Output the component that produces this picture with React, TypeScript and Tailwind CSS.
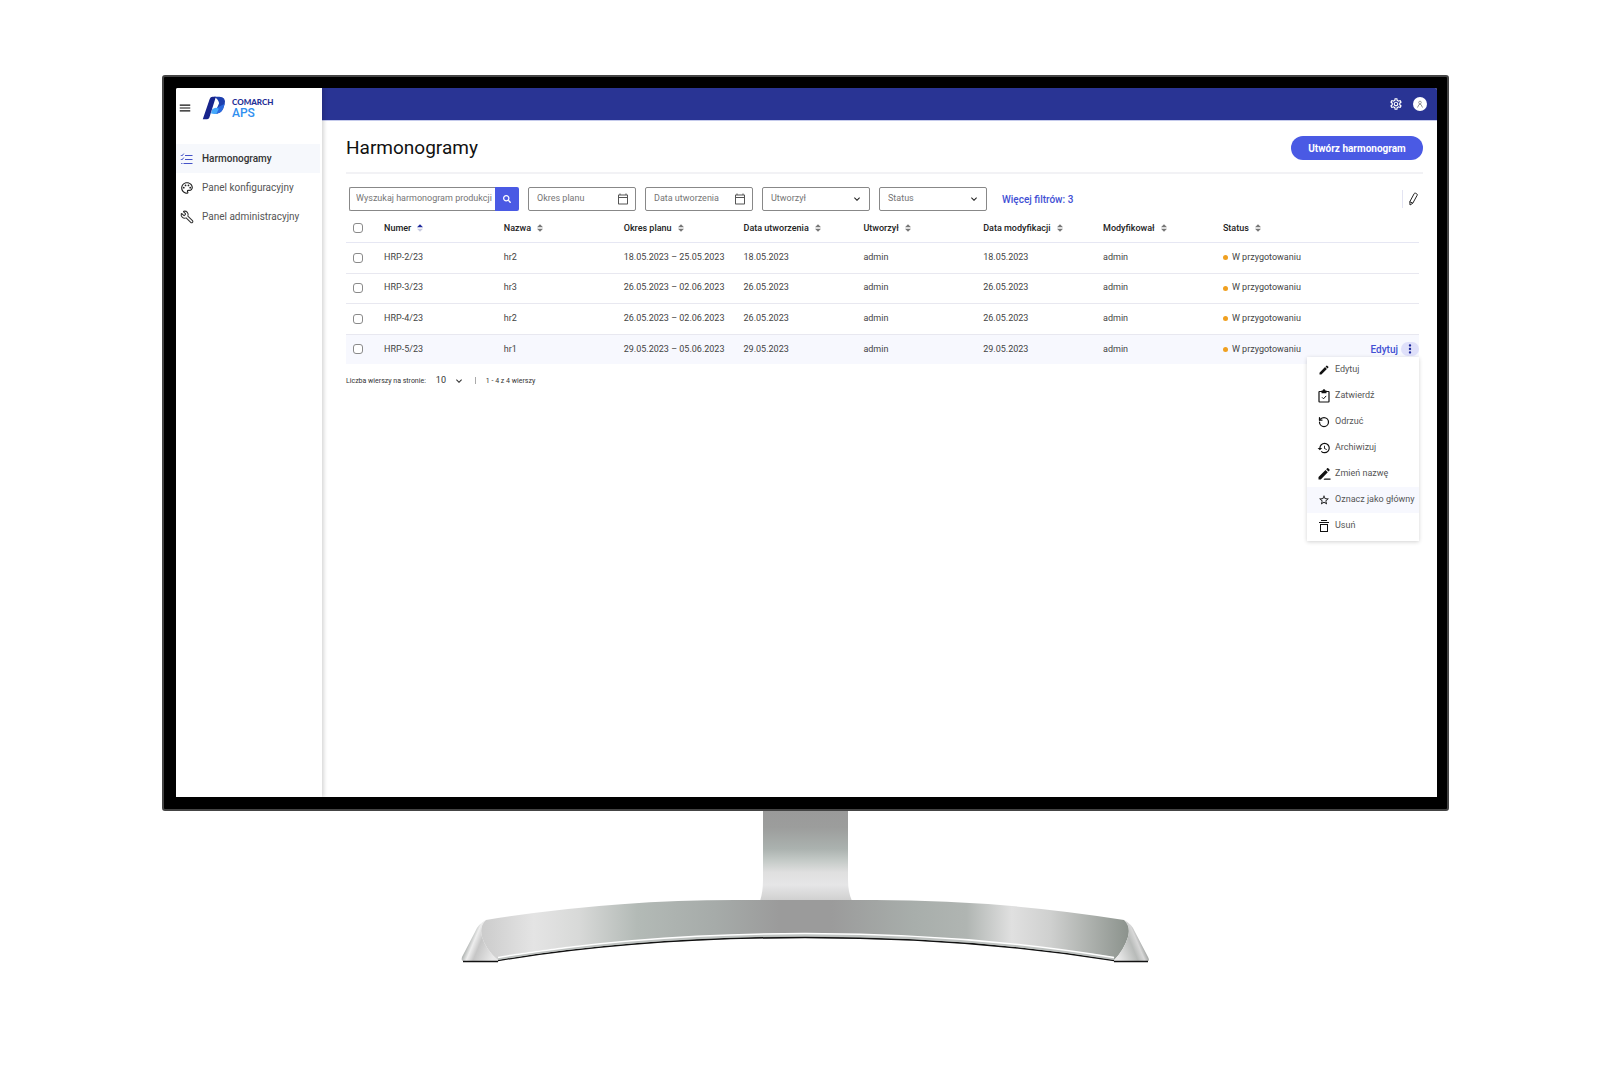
import React from "react";
import {
  MdEdit,
  MdHistory,
  MdStarBorder,
  MdOutlineSettings,
  MdOutlinePalette,
  MdMoreVert,
  MdMenu,
  MdOutlineCalendarToday,
  MdKeyboardArrowDown,
} from "react-icons/md";
import { FaSearch } from "react-icons/fa";
import { RotateCcw, Wrench } from "lucide-react";

type Row = {
  number: string;
  name: string;
  period: string;
  created: string;
  createdBy: string;
  modified: string;
  modifiedBy: string;
  status: string;
};

const columns = [
  "Numer",
  "Nazwa",
  "Okres planu",
  "Data utworzenia",
  "Utworzył",
  "Data modyfikacji",
  "Modyfikował",
  "Status",
];

const rows: Row[] = [
  { number: "HRP-2/23", name: "hr2", period: "18.05.2023 – 25.05.2023", created: "18.05.2023", createdBy: "admin", modified: "18.05.2023", modifiedBy: "admin", status: "W przygotowaniu" },
  { number: "HRP-3/23", name: "hr3", period: "26.05.2023 – 02.06.2023", created: "26.05.2023", createdBy: "admin", modified: "26.05.2023", modifiedBy: "admin", status: "W przygotowaniu" },
  { number: "HRP-4/23", name: "hr2", period: "26.05.2023 – 02.06.2023", created: "26.05.2023", createdBy: "admin", modified: "26.05.2023", modifiedBy: "admin", status: "W przygotowaniu" },
  { number: "HRP-5/23", name: "hr1", period: "29.05.2023 – 05.06.2023", created: "29.05.2023", createdBy: "admin", modified: "29.05.2023", modifiedBy: "admin", status: "W przygotowaniu" },
];

function ClipboardIcon() {
  return (
    <svg viewBox="0 0 14 14" className="size-3.5" fill="none" stroke="currentColor" strokeWidth="1.2">
      <rect x="2" y="2.5" width="10" height="10.5" rx="0.5" />
      <path d="M4.5 1.5h1.2a1.3 1.3 0 0 1 2.6 0h1.2v2.7h-5z" fill="currentColor" stroke="none" />
      <path d="M5 8.3l1.5 1.5 2.7-2.9" strokeWidth="1" />
    </svg>
  );
}

function RenameIcon() {
  return (
    <svg viewBox="0 0 14 14" className="size-3.5" fill="currentColor">
      <path d="M1.5 12.5v-2.4L8.5 3l2.300 2.300-7 7.200zM9.200 2.300l1-1c.3-.3.700-.3 1 0l1.300 1.300c.3.300.3.700 0 1l-1 1zM7.500 11.500h6v1.200h-7z" />
    </svg>
  );
}

function BinIcon() {
  return (
    <svg viewBox="0 0 12 12" className="size-3" fill="currentColor">
      <path d="M3 0h6v1H3zM1 2h10v1H1zM2 4h8v8H2zM3 5v6h6V5z" fillRule="evenodd" />
    </svg>
  );
}

function ChecklistIcon() {
  return (
    <svg viewBox="0 0 14 14" className="size-3.5 text-[#4452c8]" fill="none" stroke="currentColor" strokeWidth="1.2">
      <path d="M5 3.5H12.5M5 7.5H12.5M3.5 11.5H12.500M1.2 11.5h1.2" />
      <path d="M.8 3l1 1 2-2.400M.8 7l1 1 2-2.400" strokeWidth="1" />
    </svg>
  );
}

function Logo() {
  return (
    <svg viewBox="0 0 24 25" className="h-6 w-6" aria-hidden="true">
      <path d="M12 .8h5.500Q24.500 1 23.200 8L21.600 13Q19.500 18.600 12.500 18.600L17.300 7.500Q16.500 3 12 .8z" fill="#1d3fae" />
      <path d="M23.200 8L21.600 13Q19.500 18.600 12.500 18.600L15.500 12z" fill="#2a6ade" />
      <path d="M10.200 13.800Q13.500 10.800 17 13.200L14.600 18.400Q11.500 19 8.800 18z" fill="#45a8fb" />
      <path d="M7.500 3Q8.300.8 10.500.8H14L7.200 22.300Q6.600 24.200 4.800 24.200H.3z" fill="#17248c" />
    </svg>
  );
}

function SortIcon({ active }: { active?: boolean }) {
  return (
    <svg viewBox="0 0 8 10" className="h-2 w-1.5" aria-hidden="true">
      <path d="M4 0l4 4H0z" fill={active ? "#1f2a9c" : "#777"} />
      <path d="M4 10l4-4H0z" fill={active ? "#c9cbe0" : "#777"} />
    </svg>
  );
}

function CheckBox({ label }: { label: string }) {
  return (
    <input
      type="checkbox"
      aria-label={label}
      className="ml-[7px] block size-2.5 appearance-none rounded-[3px] border border-[#8a8a8a] bg-white"
    />
  );
}

const fieldBox =
  "flex h-6 w-27 items-center rounded-[2px] border border-[#888] bg-white pr-1.5 pl-2";

function DateField({ label }: { label: string }) {
  return (
    <label className={fieldBox}>
      <input
        type="text"
        aria-label={label}
        placeholder={label}
        className="w-full min-w-0 flex-1 bg-transparent outline-none placeholder:text-[#757575]"
      />
      <MdOutlineCalendarToday className="size-3 text-[#555]" />
    </label>
  );
}

function SelectField({ label }: { label: string }) {
  return (
    <label className={fieldBox}>
      <select
        aria-label={label}
        className="w-full min-w-0 flex-1 appearance-none bg-transparent text-[#757575] outline-none"
      >
        <option>{label}</option>
      </select>
      <MdKeyboardArrowDown className="size-3 text-[#222]" />
    </label>
  );
}

const menuItems = [
  { label: "Edytuj", icon: <MdEdit className="size-3" /> },
  { label: "Zatwierdź", icon: <ClipboardIcon /> },
  { label: "Odrzuć", icon: <RotateCcw className="size-3" strokeWidth={2.5} /> },
  { label: "Archiwizuj", icon: <MdHistory className="size-3.5" /> },
  { label: "Zmień nazwę", icon: <RenameIcon /> },
  { label: "Oznacz jako główny", icon: <MdStarBorder className="size-3" />, active: true },
  { label: "Usuń", icon: <BinIcon /> },
];

function ContextMenu() {
  return (
    <ul
      role="menu"
      className="absolute top-full right-0 z-10 w-28 bg-white pb-0.5 text-[#555] shadow-[0_1px_4px_rgba(0,0,0,0.18)]"
    >
      {menuItems.map((item) => (
        <li key={item.label} role="none">
          <button
            type="button"
            role="menuitem"
            className={
              item.active
                ? "flex h-[26px] w-full items-center gap-1 bg-[#f7f8fe] pl-2.5 whitespace-nowrap"
                : "flex h-[26px] w-full items-center gap-1 pl-2.5 whitespace-nowrap"
            }
          >
            <span className="flex w-3.5 justify-center text-[#111]">{item.icon}</span>
            {item.label}
          </button>
        </li>
      ))}
    </ul>
  );
}

function Sidebar() {
  return (
    <aside className="z-10 w-[146px] shrink-0 bg-white shadow-[2px_0_4px_rgba(0,0,0,0.16)]">
      <div className="flex h-10 items-center">
        <button type="button" aria-label="Menu" className="ml-0.5">
          <MdMenu className="size-3.5 stroke-[#111] text-[#111]" />
        </button>
        <div className="ml-2.5 flex items-center gap-1.5">
          <Logo />
          <div className="flex flex-col font-['Lato',sans-serif] font-bold">
            <span className="text-[8px] leading-[10px] font-black text-[#1f2f96]">COMARCH</span>
            <span className="font-['Roboto',sans-serif] text-[12px] leading-[13px] font-medium text-[#2f8ff0]">APS</span>
          </div>
        </div>
      </div>
      <nav className="mt-4 text-[10px] text-[#555]">
        <a href="#harmonogramy" className="mr-0.5 flex h-[29px] items-center gap-2 bg-[#f6f8fc] pl-1 font-medium text-[#333]">
          <ChecklistIcon />
          Harmonogramy
        </a>
        <a href="#konfiguracja" className="flex h-[29px] items-center gap-2 pl-1">
          <MdOutlinePalette className="size-3.5 text-[#222]" />
          Panel konfiguracyjny
        </a>
        <a href="#administracja" className="flex h-[29px] items-center gap-2 pl-1">
          <Wrench className="size-3.5 -scale-x-100 text-[#333]" strokeWidth={1.8} />
          Panel administracyjny
        </a>
      </nav>
    </aside>
  );
}

function Filters() {
  return (
    <div className="mt-[13px] flex items-center gap-[9px] pl-[3px]">
      <form className="flex h-6 w-[170px]">
        <input
          type="text"
          aria-label="Wyszukaj harmonogram produkcji"
          placeholder="Wyszukaj harmonogram produkcji"
          className="w-full min-w-0 flex-1 rounded-l-[2px] border border-r-0 border-[#888] pl-1.5 outline-none placeholder:text-[#757575]"
        />
        <button type="button" aria-label="Szukaj" className="flex w-6 items-center justify-center rounded-r-[2px] bg-[#4a5ae4] text-white">
          <FaSearch className="size-2" />
        </button>
      </form>
      <DateField label="Okres planu" />
      <DateField label="Data utworzenia" />
      <SelectField label="Utworzył" />
      <SelectField label="Status" />
      <a href="#filtry" className="ml-1.5 text-[10px] font-medium text-[#4250d4]">
        Więcej filtrów: 3
      </a>
      <button type="button" aria-label="Edytuj widok" className="mr-1 ml-auto flex h-[18px] items-center border-l border-[#e3e4f2] pl-1">
        <svg viewBox="0 0 12 14" className="h-3.5 w-3" fill="none" stroke="#222" strokeWidth="1">
          <path d="M7.200 1.600q.5-.8 1.300-.4l1.300.7q.8.500.4 1.300L5.800 11.200 3 13l-.2-3.300zM2.800 9.700l3 1.500" />
        </svg>
      </button>
    </div>
  );
}

function ScheduleTable() {
  return (
    <div className="pr-1">
      <table className="w-full table-fixed border-collapse text-left text-[#444]">
        <colgroup>
          <col className="w-[38px]" />
          {columns.slice(0, -1).map((c) => (
            <col key={c} className="w-[11.17%]" />
          ))}
          <col />
        </colgroup>
        <thead>
          <tr className="h-[31px] border-b border-[#e6e7f3] text-[#222]">
            <th scope="col" className="pt-1">
              <CheckBox label="Zaznacz wszystkie" />
            </th>
            {columns.map((c, i) => (
              <th key={c} scope="col" className="pt-1 font-medium">
                <button type="button" className="flex items-center gap-1.5 whitespace-nowrap">
                  {c}
                  <SortIcon active={i === 0} />
                </button>
              </th>
            ))}
          </tr>
        </thead>
        <tbody className="whitespace-nowrap">
          {rows.map((r, i) => {
            const last = i === rows.length - 1;
            return (
              <tr
                key={r.number}
                className={
                  last
                    ? "bg-[#f7f8fe] odd:h-[31px] even:h-[30px]"
                    : "border-b border-[#e8e8f0] odd:h-[31px] even:h-[30px]"
                }
              >
                <td>
                  <CheckBox label={"Zaznacz " + r.number} />
                </td>
                <td>{r.number}</td>
                <td>{r.name}</td>
                <td>{r.period}</td>
                <td>{r.created}</td>
                <td>{r.createdBy}</td>
                <td>{r.modified}</td>
                <td>{r.modifiedBy}</td>
                <td>
                  <div className="relative flex items-center">
                    <span className="mr-1 size-[5px] rounded-full bg-[#f0a020]" />
                    {r.status}
                    {last && (
                      <div className="ml-auto flex items-center gap-[3px]">
                        <a href="#edytuj" className="text-[10px] font-medium text-[#4250d4]">
                          Edytuj
                        </a>
                        <button type="button" aria-label="Więcej akcji" className="flex h-3.5 w-[18px] items-center justify-center rounded-full bg-[#dfe0fa]">
                          <MdMoreVert className="size-3.5 text-[#1f2a9c]" />
                        </button>
                      </div>
                    )}
                    {last && <ContextMenu />}
                  </div>
                </td>
              </tr>
            );
          })}
        </tbody>
      </table>
      <div className="mt-2.5 flex items-center text-[7px] text-[#333]">
        <label htmlFor="page-size">Liczba wierszy na stronie:</label>
        <span className="ml-2.5 flex items-center">
          <select id="page-size" className="mr-px w-4 appearance-none bg-transparent text-[9px] outline-none">
            <option>10</option>
          </select>
          <MdKeyboardArrowDown className="size-3" />
        </span>
        <span className="mx-2.5 h-[7px] w-px bg-[#aaa]" />
        <span>1 - 4 z 4 wierszy</span>
      </div>
    </div>
  );
}

function MonitorStand() {
  return (
    <svg viewBox="461 811 689 152" className="h-[152px] w-[689px] max-w-full" aria-hidden="true">
      <defs>
        <linearGradient id="neck" x1="0" y1="0" x2="0" y2="1">
          <stop offset="0" stopColor="#9a9a9a" />
          <stop offset="0.18" stopColor="#9c9d9c" />
          <stop offset="0.42" stopColor="#abb2af" />
          <stop offset="0.55" stopColor="#c4cac7" />
          <stop offset="0.68" stopColor="#dfdfdf" />
          <stop offset="0.82" stopColor="#e6e6e7" />
          <stop offset="1" stopColor="#cfcfcf" />
        </linearGradient>
        <linearGradient id="base" gradientUnits="userSpaceOnUse" x1="482" y1="930" x2="1128" y2="930">
          <stop offset="0" stopColor="#cccccc" />
          <stop offset="0.08" stopColor="#e4e4e4" />
          <stop offset="0.15" stopColor="#d8d9d8" />
          <stop offset="0.24" stopColor="#b3bab6" />
          <stop offset="0.36" stopColor="#a6aba9" />
          <stop offset="0.46" stopColor="#9b9b9b" />
          <stop offset="0.54" stopColor="#9b9b9b" />
          <stop offset="0.67" stopColor="#a8aeab" />
          <stop offset="0.75" stopColor="#b0b5b2" />
          <stop offset="0.82" stopColor="#e0e0e0" />
          <stop offset="0.88" stopColor="#cfd0cf" />
          <stop offset="1" stopColor="#8c938d" />
        </linearGradient>
        <linearGradient id="footLeft" gradientUnits="userSpaceOnUse" x1="467" y1="938" x2="496" y2="950">
          <stop offset="0" stopColor="#8b918e" />
          <stop offset="0.25" stopColor="#eeeeee" />
          <stop offset="0.45" stopColor="#c6c6c6" />
          <stop offset="1" stopColor="#e9e9e9" />
        </linearGradient>
        <linearGradient id="footRight" gradientUnits="userSpaceOnUse" x1="1144" y1="938" x2="1115" y2="950">
          <stop offset="0" stopColor="#777c79" />
          <stop offset="0.25" stopColor="#d8d8d8" />
          <stop offset="0.45" stopColor="#b8bbb9" />
          <stop offset="1" stopColor="#e9e9e9" />
        </linearGradient>
      </defs>
      <path d="M763 811H848V880Q848 892 852 901H760Q763 892 763 880z" fill="url(#neck)" />
      <path
        d="M486 920Q610 900 735 900H875Q1000 900 1124 920Q1131 926 1128 937Q1124 950 1114 960.5Q970 938 805 938Q640 938 498 960.5Q486 950 482 937Q479 926 486 920z"
        fill="url(#base)"
      />
      <path d="M498 960.5Q640 937.5 805 937.5Q970 937.5 1114 960.5" fill="none" stroke="#111" strokeWidth="1.5" />
      <path d="M498 958.5Q640 935 805 935Q970 935 1114 958.5" fill="none" stroke="#bfc3c1" strokeWidth="3" />
      <path d="M498 957.5Q640 933.5 805 933.5Q970 933.5 1114 957.5" fill="none" stroke="#fff" strokeWidth="1.5" />
      <path d="M486 920Q478 924 475 932L462 957Q461 961 463 961H498V960Q486 950 482 937Q479 926 486 920z" fill="url(#footLeft)" />
      <path d="M1124 920Q1132 924 1135 932L1148 957Q1150 961 1148 961H1114V960Q1124 950 1128 937Q1131 926 1124 920z" fill="url(#footRight)" />
      <path d="M463 961.5H498M1114 961.5H1148" stroke="#111" strokeWidth="1.5" />
    </svg>
  );
}

export default function App() {
  return (
    <div className="min-h-screen bg-white pt-[75px] pr-[151px] pb-10 pl-[162px] font-['Roboto',sans-serif]">
      <div className="rounded-[3px] border-2 border-[#444] bg-black pt-[11px] pr-2.5 pb-3 pl-3">
        <div className="flex min-h-[709px] overflow-hidden rounded-t-[2px] bg-white">
          <Sidebar />
          <div className="min-w-0 flex-1">
            <header className="flex h-[33px] items-center justify-end gap-2.5 border-b border-[#c5caec] bg-[#293494] pr-2.5">
              <button type="button" aria-label="Ustawienia" className="text-white">
                <MdOutlineSettings className="size-3.5 stroke-white" />
              </button>
              <button type="button" aria-label="Konto" className="flex size-3.5 items-center justify-center rounded-full bg-white text-[#999]">
                <svg viewBox="0 0 8 8" className="size-2" fill="none" stroke="currentColor">
                  <circle cx="4" cy="2.5" r="1.3" />
                  <path d="M1.5 7.5L3 4.5h2l1.5 3" />
                </svg>
              </button>
            </header>
            <main className="pr-3.5 pl-6 text-[9px]">
              <div className="flex h-[53px] items-center justify-between border-b-2 border-[#f2f2f5] pt-[3px]">
                <h1 className="text-[19px] text-[#111]">Harmonogramy</h1>
                <button type="button" className="h-6 w-33 rounded-full bg-[#4a5ae4] text-[10px] font-bold text-white">
                  Utwórz harmonogram
                </button>
              </div>
              <Filters />
              <ScheduleTable />
            </main>
          </div>
        </div>
      </div>
      <div className="flex justify-center">
        <MonitorStand />
      </div>
    </div>
  );
}
